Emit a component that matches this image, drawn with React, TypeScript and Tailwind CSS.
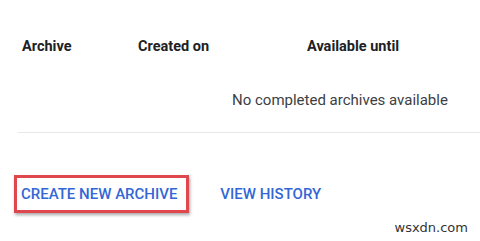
import React from 'react';

const App: React.FC = () => {
  return (
    <div className="relative w-[480px] h-[241px] bg-white overflow-hidden font-['Roboto',sans-serif]">
      <div className="pl-[18px]">
        <div className="flex pt-[36px] h-[68px] text-[14.5px] font-bold text-[#202124]">
          <div className="w-[120px] pl-[4px]">Archive</div>
          <div className="w-[169px]">Created on</div>
          <div>Available until</div>
        </div>
        <div className="flex h-[65px] items-center pl-[214px] text-[15px] text-[#3c4043] border-b border-[#e8e8e8]">
          No completed archives available
        </div>
      </div>

      <div className="flex items-center pl-[14px] pt-[42px] gap-[31px]">
        <div className="border-[3px] border-[#e0474c] shadow-[1px_2px_3px_rgba(0,0,0,0.35)] h-[38px] pl-[4px] pr-[9px] flex items-center">
          <span className="text-[15px] font-medium text-[#3367d6]">CREATE NEW ARCHIVE</span>
        </div>
        <span className="text-[15px] font-medium text-[#3367d6]">VIEW HISTORY</span>
      </div>

      <div className="absolute right-[12px] bottom-[4px] text-[13px] text-[#333] font-['DejaVu_Sans',sans-serif]">wsxdn.com</div>
    </div>
  );
};

export default App;
